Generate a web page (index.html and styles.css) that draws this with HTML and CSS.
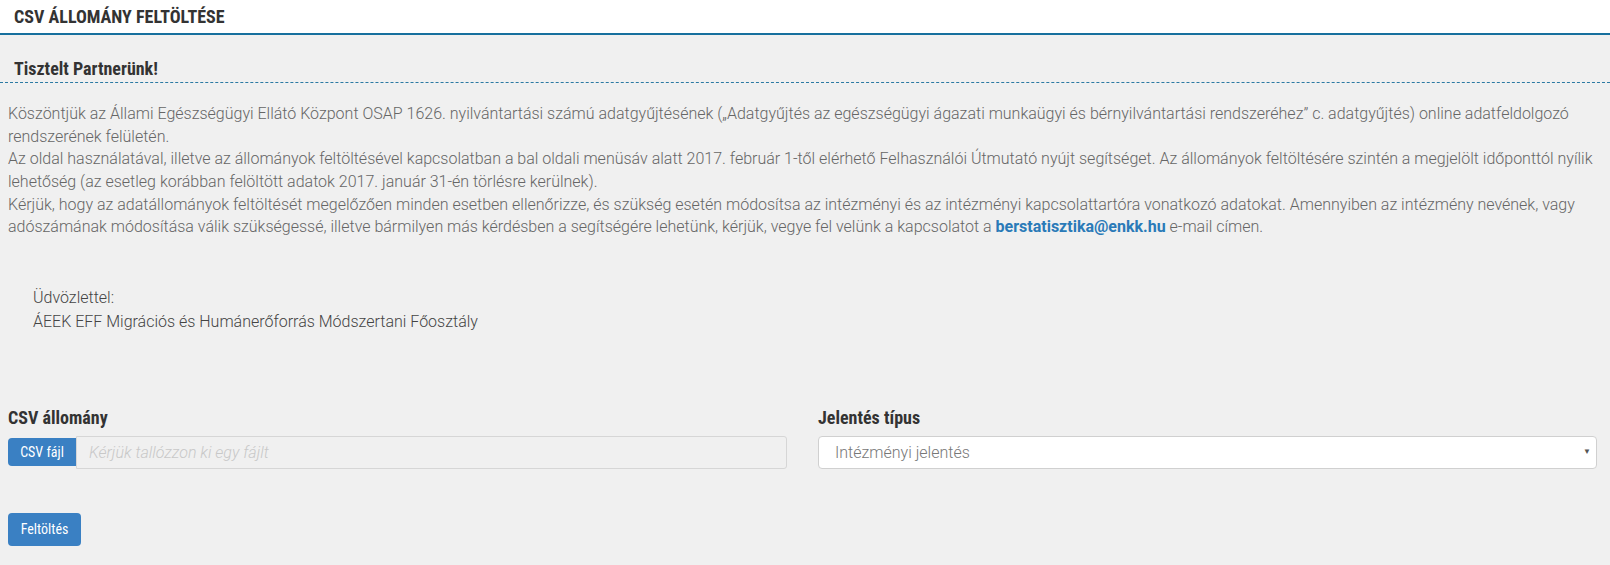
FILE: index.html
```html
<!DOCTYPE html>
<html lang="hu">
<head>
    <meta charset="UTF-8">
    <meta name="viewport" content="width=device-width, initial-scale=1.0">
    <title>CSV állomány feltöltése</title>
    <link rel="stylesheet" href="styles.css">
</head>
<body>
    <div class="page-header">
        <h1>CSV ÁLLOMÁNY FELTÖLTÉSE</h1>
    </div>

    <div class="content">
        <h2 class="greeting">Tisztelt Partnerünk!</h2>

        <p class="intro">
            Köszöntjük az Állami Egészségügyi Ellátó Központ OSAP 1626. nyilvántartási számú adatgyűjtésének („Adatgyűjtés az egészségügyi ágazati munkaügyi és bérnyilvántartási rendszeréhez” c. adatgyűjtés) online adatfeldolgozó rendszerének felületén.<br>
            Az oldal használatával, illetve az állományok feltöltésével kapcsolatban a bal oldali menüsáv alatt 2017. február 1-től elérhető Felhasználói Útmutató nyújt segítséget. Az állományok feltöltésére szintén a megjelölt időponttól nyílik lehetőség (az esetleg korábban felöltött adatok 2017. január 31-én törlésre kerülnek).<br>
            Kérjük, hogy az adatállományok feltöltését megelőzően minden esetben ellenőrizze, és szükség esetén módosítsa az intézményi és az intézményi kapcsolattartóra vonatkozó adatokat. Amennyiben az intézmény nevének, vagy adószámának módosítása válik szükségessé, illetve bármilyen más kérdésben a segítségére lehetünk, kérjük, vegye fel velünk a kapcsolatot a <a href="#" class="mail">berstatisztika@enkk.hu</a> e-mail címen.
        </p>

        <div class="signature">
            Üdvözlettel:<br>
            ÁEEK EFF Migrációs és Humánerőforrás Módszertani Főosztály
        </div>

        <form class="upload-form">
            <div class="form-row">
                <div class="form-group">
                    <label>CSV állomány</label>
                    <div class="file-field">
                        <span class="btn btn-file">CSV fájl</span>
                        <input type="text" class="file-name" placeholder="Kérjük tallózzon ki egy fájlt" readonly>
                    </div>
                </div>
                <div class="form-group">
                    <label for="report-type">Jelentés típus</label>
                    <div class="select-box">
                        <select id="report-type">
                            <option>Intézményi jelentés</option>
                        </select>
                        <span class="caret">▼</span>
                    </div>
                </div>
            </div>
            <button type="submit" class="btn btn-submit">Feltöltés</button>
        </form>
    </div>
</body>
</html>
```

FILE: styles.css
```css
body { margin: 0; background: #f0f0f0; font-family: Roboto, sans-serif; color: #666; }
.page-header { background: #fff; height: 33px; border-bottom: 2px solid #17709e; display: flex; align-items: center; padding-left: 14px; }
.page-header h1 { margin: 0; font-family: "Roboto Condensed", Roboto, sans-serif; font-size: 18px; font-weight: 700; color: #333; }
.content { padding: 0 13px 0 8px; }
.greeting { margin: 23px -13px 0 -8px; padding: 0 0 2px 14px; font-family: "Roboto Condensed", Roboto, sans-serif; font-size: 18px; line-height: 22px; font-weight: 700; color: #333; border-bottom: 1px dashed #2c7aa3; }
.intro { margin: 20px 0 0; font-size: 16px; font-weight: 300; line-height: 22.66px; }
.mail { color: #2a7ab8; font-weight: 700; text-decoration: none; }
.signature { margin: 47px 0 0 25px; font-size: 16px; font-weight: 300; line-height: 24px; color: #444; }
.upload-form { margin-top: 73px; }
.form-row { display: grid; grid-template-columns: 779px 779px; column-gap: 31px; }
.form-group label { display: block; font-family: "Roboto Condensed", Roboto, sans-serif; font-size: 18px; line-height: 22px; font-weight: 700; color: #333; margin-bottom: 7px; }
.file-field { display: flex; align-items: center; height: 33px; }
.btn { font-family: "Roboto Condensed", Roboto, sans-serif; font-size: 14px; color: #fff; background: #3a80c3; border: none; border-radius: 4px; }
.btn-file { height: 28px; width: 68px; display: flex; align-items: center; justify-content: center; border-radius: 4px 0 0 4px; }
.file-name { flex: 1; height: 33px; box-sizing: border-box; border: 1px solid #d6d6d6; border-radius: 0 3px 3px 0; background: #f0f0f0; padding: 0 12px; font-family: Roboto, sans-serif; font-size: 16px; font-weight: 300; font-style: italic; }
.file-name::placeholder { color: #c8c8c8; }
.select-box { position: relative; }
.select-box select { width: 100%; height: 33px; appearance: none; background: #fff; border: 1px solid #d0d0d0; border-radius: 4px; padding: 0 16px; font-family: Roboto, sans-serif; font-size: 16px; font-weight: 300; color: #777; }
.caret { position: absolute; right: 6px; top: 11px; font-size: 8px; color: #555; pointer-events: none; }
.btn-submit { display: block; margin-top: 44px; width: 73px; height: 33px; padding: 0; }
```
